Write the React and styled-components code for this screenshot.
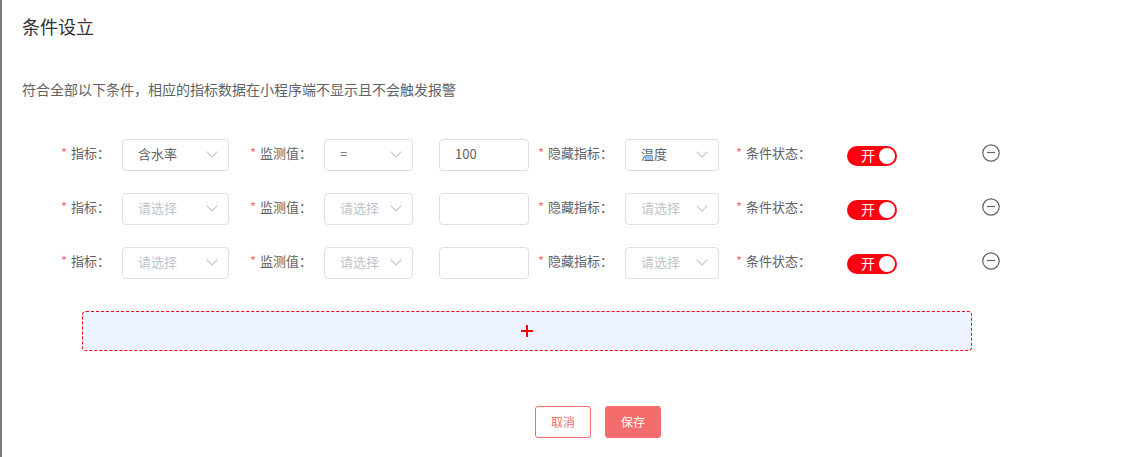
import React, { useId, useState } from 'react'
import styled, { createGlobalStyle } from 'styled-components'

const GlobalStyle = createGlobalStyle`
  * {
    box-sizing: border-box;
  }

  body {
    margin: 0;
    background: #7a7a7a;
    color: #606266;
    font-family: 'Noto Sans CJK SC', 'Liberation Sans', sans-serif;
    font-size: 13px;
  }

  button, input, select {
    font-family: inherit;
    font-size: inherit;
  }
`

const Drawer = styled.main`
  min-height: 100vh;
  margin-left: 2px;
  padding: 11px 20px 19px;
  background: #fff;
`

const Title = styled.h1`
  margin: 0;
  color: #303133;
  font-size: 18px;
  font-weight: 400;
  line-height: 30px;
`

const Description = styled.p`
  margin: 36px 0 38px;
  font-size: 14px;
  line-height: 24px;
`

const ConditionRow = styled.div`
  display: grid;
  grid-template-columns: 187fr 184fr 116fr 190fr 263fr 133fr;
  align-items: start;
  margin: 0 0 22px 20px;
`

const Field = styled.div`
  display: flex;
  min-width: 0;
  padding-left: ${props => props.$indent || 0}px;
`

const Label = styled.label`
  flex: none;
  width: ${props => props.$width}px;
  padding-right: 12px;
  line-height: 28px;
  text-align: right;
  white-space: nowrap;

  &::before {
    content: '*';
    margin-right: 4px;
    color: #f56c6c;
  }
`

const SelectBox = styled.div`
  position: relative;
  flex: 1;
  min-width: 0;

  svg {
    position: absolute;
    top: 8px;
    right: 10px;
    pointer-events: none;
  }
`

const Select = styled.select`
  display: block;
  width: 100%;
  height: 32px;
  padding: 0 30px 4px 15px;
  border: 1px solid #dcdfe6;
  border-radius: 4px;
  background: #fff;
  color: ${props => (props.$empty ? '#c0c4cc' : '#606266')};
  appearance: none;
`

const TextInput = styled.input`
  width: 100%;
  height: 32px;
  padding: 0 15px 4px;
  border: 1px solid #dcdfe6;
  border-radius: 4px;
  background: #fff;
  color: #606266;
`

const Switch = styled.span`
  position: relative;
  display: flex;
  align-items: center;
  width: 50px;
  height: 20px;
  margin: 7px 0 0 24px;
  padding: 0 14px 2px;
  justify-content: ${props => (props.$on ? 'flex-start' : 'flex-end')};
  border-radius: 10px;
  background: ${props => (props.$on ? '#ff0010' : '#dcdfe6')};
  color: #fff;
  font-size: 14px;
  line-height: 18px;

  &::after {
    content: '';
    position: absolute;
    top: 2px;
    ${props => (props.$on ? 'right' : 'left')}: 2px;
    width: 16px;
    height: 16px;
    border-radius: 50%;
    background: #fff;
  }
`

const SwitchInput = styled.input`
  position: absolute;
  inset: 0;
  z-index: 1;
  width: 100%;
  height: 100%;
  margin: 0;
  opacity: 0;
  cursor: pointer;
`

const RemoveButton = styled.button`
  display: flex;
  justify-self: start;
  margin-top: 5px;
  padding: 0;
  border: 0;
  background: none;
  color: #606266;
  cursor: pointer;
`

const AddButton = styled.button`
  display: flex;
  align-items: center;
  justify-content: center;
  width: calc(100% - 203px);
  height: 40px;
  margin: 32px 0 55px 60px;
  border: 1px dashed #ff0010;
  border-radius: 4px;
  background: #ecf3fe;
  color: #ff0010;
  cursor: pointer;
`

const Footer = styled.footer`
  display: flex;
  justify-content: center;
  gap: 14px;
  padding-left: 59px;
`

const Button = styled.button`
  width: 56px;
  height: 32px;
  padding: 0 0 2px;
  border: 1px solid #f56c6c;
  border-radius: 3px;
  background: ${props => (props.$primary ? '#f56c6c' : '#fff')};
  color: ${props => (props.$primary ? '#fff' : '#f56c6c')};
  font-size: 12px;
  cursor: pointer;
`

const METRICS = ['含水率', '温度']
const OPERATORS = ['=', '>', '<']

const emptyCondition = { metric: '', operator: '', value: '', hidden: '', on: true }

const SelectField = ({ label, labelWidth, value, options, onChange }) => {
  const id = useId()
  return (
    <Field>
      <Label htmlFor={id} $width={labelWidth}>{label}：</Label>
      <SelectBox>
        <Select id={id} value={value} $empty={!value} onChange={e => onChange(e.target.value)}>
          <option value="" disabled hidden>请选择</option>
          {options.map(option => <option key={option}>{option}</option>)}
        </Select>
        <svg width="14" height="14" viewBox="0 0 14 14" fill="none" stroke="#c0c4cc" aria-hidden="true">
          <path d="M1.7 4.7 7 10l5.3-5.3" strokeWidth="1.1" />
        </svg>
      </SelectBox>
    </Field>
  )
}

const Condition = ({ condition, onChange, onRemove }) => {
  const switchId = useId()
  const set = key => value => onChange({ ...condition, [key]: value })
  return (
    <ConditionRow>
      <SelectField label="指标" labelWidth={80} value={condition.metric} options={METRICS} onChange={set('metric')} />
      <SelectField label="监测值" labelWidth={95} value={condition.operator} options={OPERATORS} onChange={set('operator')} />
      <Field $indent={26}>
        <TextInput aria-label="监测值" value={condition.value} onChange={e => set('value')(e.target.value)} />
      </Field>
      <SelectField label="隐藏指标" labelWidth={96} value={condition.hidden} options={METRICS} onChange={set('hidden')} />
      <Field>
        <Label htmlFor={switchId} $width={104}>条件状态：</Label>
        <Switch $on={condition.on}>
          {condition.on ? '开' : '关'}
          <SwitchInput
            id={switchId}
            type="checkbox"
            role="switch"
            checked={condition.on}
            onChange={e => set('on')(e.target.checked)}
          />
        </Switch>
      </Field>
      <RemoveButton type="button" aria-label="删除" onClick={onRemove}>
        <svg width="18" height="18" viewBox="0 0 18 18" fill="none" stroke="currentColor" strokeWidth="1.2">
          <circle cx="9" cy="9" r="8.2" />
          <path d="M5 8.5h8" />
        </svg>
      </RemoveButton>
    </ConditionRow>
  )
}

const App = () => {
  const [conditions, setConditions] = useState([
    { id: 1, metric: '含水率', operator: '=', value: '100', hidden: '温度', on: true },
    { id: 2, ...emptyCondition },
    { id: 3, ...emptyCondition }
  ])

  const update = next => setConditions(conditions.map(item => (item.id === next.id ? next : item)))
  const remove = id => setConditions(conditions.filter(item => item.id !== id))
  const add = () => setConditions([...conditions, { id: Date.now(), ...emptyCondition }])

  return (
    <>
      <GlobalStyle />
      <Drawer>
        <Title>条件设立</Title>
        <Description>符合全部以下条件，相应的指标数据在小程序端不显示且不会触发报警</Description>
        {conditions.map(item => (
          <Condition key={item.id} condition={item} onChange={update} onRemove={() => remove(item.id)} />
        ))}
        <AddButton type="button" aria-label="添加" onClick={add}>
          <svg width="12" height="12" viewBox="0 0 12 12" stroke="currentColor" strokeWidth="2">
            <path d="M6 0v12M0 6h12" />
          </svg>
        </AddButton>
        <Footer>
          <Button type="button">取消</Button>
          <Button type="button" $primary>保存</Button>
        </Footer>
      </Drawer>
    </>
  )
}

export default App
